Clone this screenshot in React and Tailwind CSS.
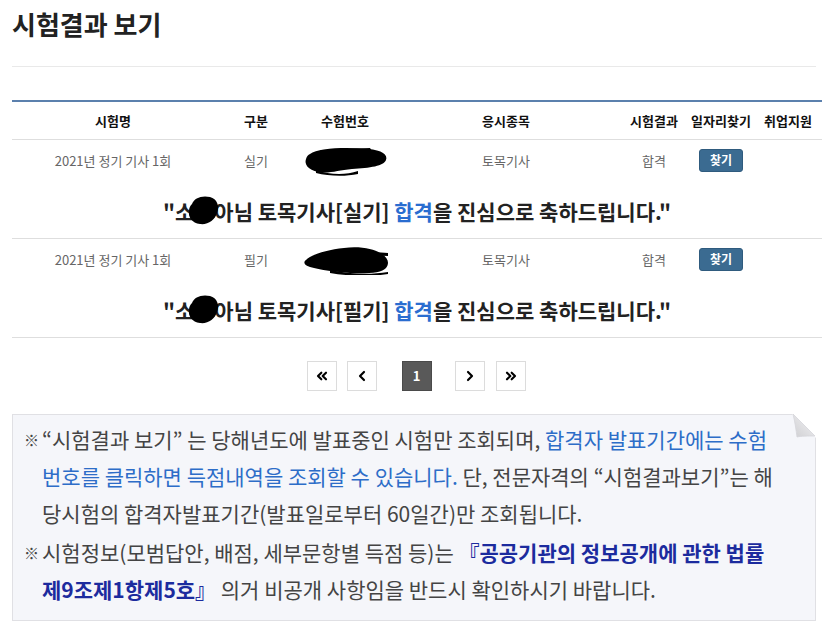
import React from 'react';
import { ChevronsLeft, ChevronLeft, ChevronRight, ChevronsRight } from 'lucide-react';

const results = [
  { exam: '2021년 정기 기사 1회', type: '실기', field: '토목기사', result: '합격' },
  { exam: '2021년 정기 기사 1회', type: '필기', field: '토목기사', result: '합격' },
];

// marker scribble over the exam number
const NumberBlob = ({ variant }) => (
  <svg width="90" height="32" viewBox="0 0 90 32" className="mx-auto block">
    {variant === 0 ? (
      <g fill="#000">
        <path d="M10 10 C18 4, 45 3, 68 5 C82 6, 88 11, 86 16 C84 22, 70 24, 52 25 C38 26, 30 30, 18 28 C8 26, 4 20, 6 15 C7 12, 8 11, 10 10 Z" />
        <path d="M20 6 L70 4 L72 7 L22 9 Z" />
        <path d="M16 26 C30 31, 46 31, 58 27 L58 30 C44 33, 28 32, 16 29 Z" />
      </g>
    ) : (
      <g fill="#000">
        <path d="M6 17 C10 12, 26 7, 44 5 C60 3, 74 6, 80 10 C88 14, 90 20, 86 25 C82 30, 66 31, 50 30 C36 29, 20 27, 10 24 C4 22, 3 19, 6 17 Z" />
        <path d="M60 8 L88 10 L88 13 L62 12 Z" />
        <path d="M30 27 C48 31, 70 32, 88 29 L88 31 C70 34, 48 33, 30 30 Z" />
      </g>
    )}
  </svg>
);

const NameBlob = () => (
  <span className="relative inline-block w-[20px]">
    <span className="invisible">○</span>
    <svg width="34" height="32" viewBox="0 0 34 32" className="absolute left-[-8px] top-[-2px]">
      <path
        d="M6 10 C8 4, 16 1, 24 3 C31 5, 34 12, 31 19 C29 26, 22 31, 14 30 C6 29, 2 23, 3 17 C3 14, 4 12, 6 10 Z"
        fill="#000"
      />
    </svg>
  </span>
);

const PageButton = ({ children, active }) => (
  <button
    className={
      active
        ? 'w-[30px] h-[30px] flex items-center justify-center bg-[#595959] border border-[#4a4a4a] text-white text-[13px] font-bold'
        : 'w-[30px] h-[30px] flex items-center justify-center bg-white border border-[#dcdcdc] text-black'
    }
  >
    {children}
  </button>
);

const App = () => {
  return (
    <div className="w-[828px] h-[639px] bg-white overflow-hidden font-['Noto_Sans_CJK_KR',sans-serif]">
      <div className="px-3">
        <h1 className="pt-[5px] text-[26px] leading-[37px] font-bold text-[#222]">시험결과 보기</h1>
        <div className="mt-[24px] border-t border-[#e9e9e9]" />

        <table className="mt-[33px] w-full table-fixed border-t-2 border-[#5b80ad] border-collapse">
          <colgroup>
            <col className="w-[202px]" />
            <col className="w-[84px]" />
            <col className="w-[94px]" />
            <col className="w-[228px]" />
            <col className="w-[68px]" />
            <col className="w-[66px]" />
            <col className="w-[68px]" />
          </colgroup>
          <thead>
            <tr className="h-[38px] border-b border-[#dedede] text-[13px] font-bold text-[#111]">
              <th>시험명</th>
              <th>구분</th>
              <th>수험번호</th>
              <th>응시종목</th>
              <th>시험결과</th>
              <th>일자리찾기</th>
              <th>취업지원</th>
            </tr>
          </thead>
          <tbody>
            {results.map((row, i) => (
              <React.Fragment key={i}>
                <tr className="h-[42px] text-[13px] text-[#666] text-center">
                  <td>{row.exam}</td>
                  <td>{row.type}</td>
                  <td>
                    <NumberBlob variant={i} />
                  </td>
                  <td>{row.field}</td>
                  <td>{row.result}</td>
                  <td>
                    <button className="w-[44px] h-[23px] mx-auto flex items-center justify-center rounded-[3px] bg-[#3b6b91] border border-[#2f5b7e] text-white text-[12px] font-bold">
                      찾기
                    </button>
                  </td>
                  <td></td>
                </tr>
                <tr className="h-[57px] border-b border-[#dedede]">
                  <td colSpan="7" className="text-center text-[21px] font-bold text-[#222] pt-[4px]">
                    "소<NameBlob />아님 토목기사[{row.type}] <span className="text-[#2a6dd0]">합격</span>을 진심으로 축하드립니다."
                  </td>
                </tr>
              </React.Fragment>
            ))}
          </tbody>
        </table>

        <div className="mt-[23px] flex justify-center items-center">
          <div className="flex items-center ml-[4px]">
            <PageButton><ChevronsLeft size={16} strokeWidth={3.2} /></PageButton>
            <div className="ml-[10px]"><PageButton><ChevronLeft size={16} strokeWidth={3.2} /></PageButton></div>
            <div className="ml-[25px]"><PageButton active>1</PageButton></div>
            <div className="ml-[23px]"><PageButton><ChevronRight size={16} strokeWidth={3.2} /></PageButton></div>
            <div className="ml-[11px]"><PageButton><ChevronsRight size={16} strokeWidth={3.2} /></PageButton></div>
          </div>
        </div>

        <div className="relative mt-[23px] bg-[#f5f6fa] border border-[#e0e0e4] pl-[11px] pt-[6px] pb-[12px] text-[21px] leading-[37px] text-[#444]">
          <div className="flex">
            <span className="w-[18px] shrink-0 text-[15px] text-[#444]">※</span>
            <div>
              <div className="whitespace-nowrap">
                “시험결과 보기” 는 당해년도에 발표중인 시험만 조회되며, <span className="text-[#2d6dc8]">합격자 발표기간에는 수험</span>
              </div>
              <div className="whitespace-nowrap">
                <span className="text-[#2d6dc8]">번호를 클릭하면 득점내역을 조회할 수 있습니다.</span> 단, 전문자격의 “시험결과보기”는 해
              </div>
              <div className="whitespace-nowrap">당시험의 합격자발표기간(발표일로부터 60일간)만 조회됩니다.</div>
            </div>
          </div>
          <div className="flex mt-[2px]">
            <span className="w-[18px] shrink-0 text-[15px] text-[#444]">※</span>
            <div>
              <div className="whitespace-nowrap">
                시험정보(모범답안, 배점, 세부문항별 득점 등)는 <span className="font-bold text-[#1c2b9e]">『공공기관의 정보공개에 관한 법률</span>
              </div>
              <div className="whitespace-nowrap">
                <span className="font-bold text-[#1c2b9e]">제9조제1항제5호』</span> 의거 비공개 사항임을 반드시 확인하시기 바랍니다.
              </div>
            </div>
          </div>

          <svg width="24" height="24" viewBox="0 0 24 24" className="absolute -top-px -right-px">
            <defs>
              <linearGradient id="fold" x1="0" y1="1" x2="1" y2="0">
                <stop offset="0" stopColor="#cfcfd2" />
                <stop offset="1" stopColor="#f4f4f6" />
              </linearGradient>
            </defs>
            <polygon points="0,0 24,0 24,24" fill="#fff" />
            <path d="M1 0 L23 22 C16 22, 9 22, 5 23 C4 16, 3 8, 1 0 Z" fill="url(#fold)" stroke="#d6d6da" strokeWidth="0.8" />
          </svg>
        </div>
      </div>
    </div>
  );
};

export default App;
